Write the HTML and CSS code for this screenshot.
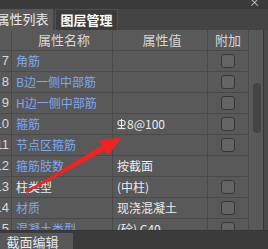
FILE: index.html
```
<!DOCTYPE html>
<html lang="zh">
<head>
<meta charset="UTF-8"/>
<title>属性列表</title>
<link rel="stylesheet" href="styles.css">
</head>
<body>
<div class="panel">
 <div class="topband"><span class="close">×</span></div>
 <div class="tabs">
  <div class="tab active">属性列表</div>
  <div class="tab dark">图层管理</div>
 </div>
 <div class="grid-wrap">
  <div class="grid">
   <div class="row head">
    <div class="c num"></div><div class="c name">属性名称</div><div class="c val">属性值</div><div class="c add">附加</div>
   </div>
   <div class="row"><div class="c num">7</div><div class="c name blue">角筋</div><div class="c val"></div><div class="c add"><span class="chk"></span></div></div>
   <div class="row"><div class="c num">8</div><div class="c name blue">B边一侧中部筋</div><div class="c val"></div><div class="c add"><span class="chk"></span></div></div>
   <div class="row"><div class="c num">9</div><div class="c name blue">H边一侧中部筋</div><div class="c val"></div><div class="c add"><span class="chk"></span></div></div>
   <div class="row"><div class="c num">10</div><div class="c name blue">箍筋</div><div class="c val"><svg class="rebar" width="9" height="11" viewBox="0 0 9 11"><rect x="1" y="1.5" width="7" height="5" rx="2" fill="none" stroke="#e8e8e8" stroke-width="1.2"/><line x1="4.5" y1="0" x2="4.5" y2="9.5" stroke="#e8e8e8" stroke-width="1.2"/><line x1="0.5" y1="9.5" x2="8.5" y2="9.5" stroke="#e8e8e8" stroke-width="1.2"/></svg>8@100</div><div class="c add"><span class="chk"></span></div></div>
   <div class="row"><div class="c num">11</div><div class="c name blue">节点区箍筋</div><div class="c val"></div><div class="c add"><span class="chk"></span></div></div>
   <div class="row"><div class="c num">12</div><div class="c name blue">箍筋肢数</div><div class="c val">按截面</div><div class="c add"></div></div>
   <div class="row"><div class="c num">13</div><div class="c name">柱类型</div><div class="c val">(中柱)</div><div class="c add"><span class="chk"></span></div></div>
   <div class="row"><div class="c num">14</div><div class="c name blue">材质</div><div class="c val">现浇混凝土</div><div class="c add"><span class="chk"></span></div></div>
   <div class="row"><div class="c num">15</div><div class="c name blue">混凝土类型</div><div class="c val">(砼) C40</div><div class="c add"><span class="chk"></span></div></div>
  </div>
  <div class="scroll"><div class="thumb"></div></div>
  <div class="edge"></div>
 </div>
 <div class="bottom">
  <div class="tab active low">截面编辑</div>
 </div>
</div>
<svg class="arrow" width="268" height="249" viewBox="0 0 268 249">
 <polygon points="25.6,191.2 102.2,145.3 99.4,140.5 122,137.5 107.8,155.3 105,150.5 26.4,193" fill="#f22222"/>
</svg>
</body>
</html>
```
FILE: styles.css
```
html, body{
 margin: 0;
 padding: 0;
 background: #474747;
 overflow: hidden;
}
body{
 width: 268px;
 height: 249px;
 position: relative;
 font-family: "Noto Sans CJK SC", "Noto Sans", sans-serif;
 font-size: 12px;
 color: #e6e6e6;
}
.panel{
 width: 276px;
 margin-left: -8px;
}
.topband{
 height: 9px;
 background: #3a3a3a;
 position: relative;
}
.close{
 position: absolute;
 right: 8px;
 top: -5px;
 font-size: 11px;
 color: #cfcfcf;
 line-height: 14px;
}
.tabs{
 display: flex;
 height: 21px;
 background: #444444;
 align-items: flex-end;
}
.tab{
 height: 21px;
 line-height: 20px;
 font-size: 13px;
 text-align: center;
 box-sizing: border-box;
}
.tab.active{
 width: 61px;
 background: #595959;
 color: #e8e8e8;
}
.tab.dark{
 width: 63px;
 margin-left: 2px;
 background: #3c3c3c;
 border: 1px solid #505050;
 border-bottom: none;
 color: #ffffff;
 font-weight: bold;
}
.grid-wrap{
 display: flex;
 height: 200px;
 overflow: hidden;
 background: #595959;
 border-bottom: 1px solid #363636;
}
.grid{
 width: 257px;
}
.row{
 display: grid;
 grid-template-columns: 20px 101px 95px 41px;
 height: 21px;
}
.c{
 box-sizing: border-box;
 border-right: 1px solid #4a4a4a;
 border-bottom: 1px solid #4a4a4a;
 line-height: 20px;
 white-space: nowrap;
 overflow: hidden;
}
.head .c{
 text-align: center;
 color: #d6d6d6;
 font-size: 13px;
}
.num{
 text-align: right;
 padding-right: 2px;
 color: #d8d8d8;
 font-size: 13px;
 font-family: "Liberation Sans", sans-serif;
}
.name{
 padding-left: 4px;
 color: #ececec;
}
.name.blue{
 color: #7ea8ee;
}
.val{
 padding-left: 4px;
 color: #ececec;
}
.rebar{
 vertical-align: -1px;
 margin-right: 1px;
}
.add{
 display: flex;
 align-items: center;
 justify-content: center;
}
.chk{
 width: 14px;
 height: 14px;
 box-sizing: border-box;
 border: 1px solid #363636;
 border-radius: 3px;
 background: #646464;
}
.scroll{
 width: 15px;
 box-sizing: border-box;
 border-right: 1px solid #363636;
 padding-top: 53px;
 padding-left: 4px;
}
.thumb{
 width: 8px;
 height: 50px;
 border-radius: 4px;
 background: #454545;
}
.edge{
 flex: 1;
 background: #4a4a4a;
}
.bottom{
 height: 18px;
 background: #3b3b3b;
 display: flex;
 align-items: flex-end;
}
.tab.low{
 width: 81px;
 height: 16px;
 line-height: 18px;
 overflow: hidden;
 background: #585858;
}
.arrow{
 position: absolute;
 left: 0;
 top: 0;
}
```
